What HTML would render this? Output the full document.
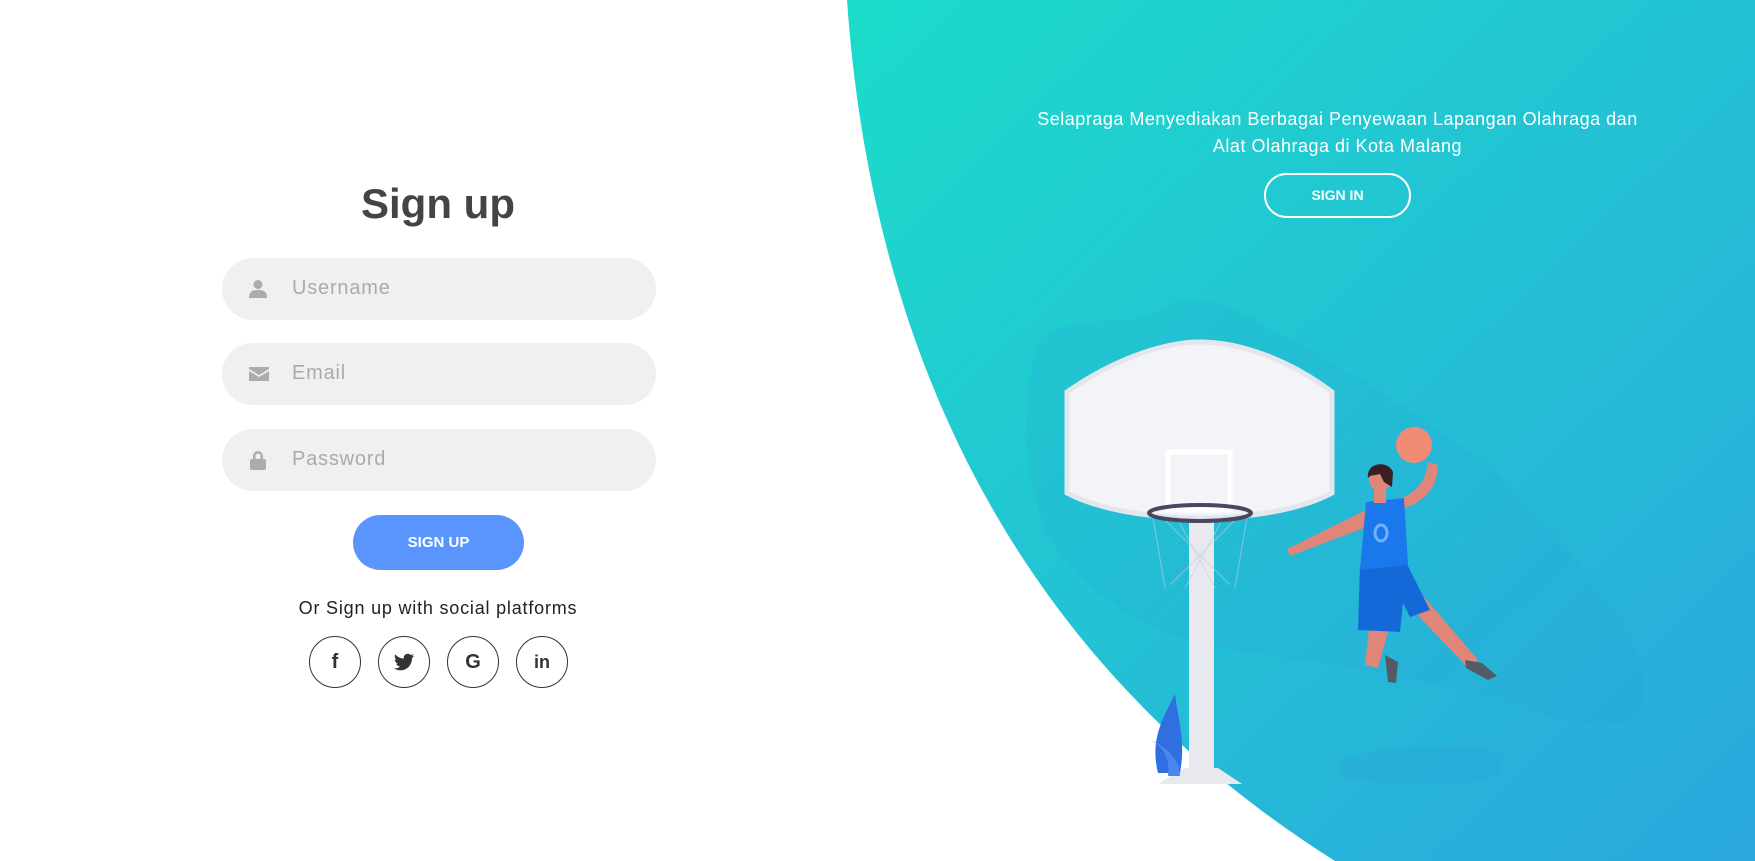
<!DOCTYPE html>
<html><head><meta charset="utf-8"><style>
*{margin:0;padding:0;box-sizing:border-box}
body{width:1755px;height:861px;overflow:hidden;background:#fff;font-family:"Liberation Sans",sans-serif;position:relative}
svg.bg{position:absolute;left:0;top:0}
.title{position:absolute;left:238px;width:400px;top:180px;text-align:center;font-size:42px;font-weight:bold;color:#444}
.inp{position:absolute;left:222px;width:434px;height:62px;border-radius:31px;background:#f0f0f0}
.inp span{position:absolute;left:70px;top:19px;font-size:20px;letter-spacing:0.8px;color:#aaa}
.inp svg{position:absolute;left:26px;top:21px}
.btn{position:absolute;left:353px;top:515px;width:171px;height:55px;border-radius:28px;background:#5995fd;color:#fff;font-weight:bold;font-size:15px;text-align:center;line-height:55px}
.soc{position:absolute;left:188px;width:500px;top:598px;text-align:center;font-size:18px;letter-spacing:0.8px;color:#222}
.c{position:absolute;top:636px;width:52px;height:52px;border:1px solid #333;border-radius:50%;text-align:center;line-height:50px;font-weight:bold;font-size:20px;color:#333}
.rt{position:absolute;left:950px;width:775px;top:106px;text-align:center;color:#fff;font-size:18px;letter-spacing:0.5px;line-height:27px}
.si{position:absolute;left:1264px;top:173px;width:147px;height:45px;border:2px solid #fff;border-radius:23px;color:#fff;font-weight:bold;font-size:14px;text-align:center;line-height:41px}
</style></head><body>
<svg class="bg" width="1755" height="861" viewBox="0 0 1755 861">
<defs><linearGradient id="g" x1="0" y1="0" x2="1" y2="1"><stop offset="0" stop-color="#1bdcca"/><stop offset="1" stop-color="#2ba7de"/></linearGradient></defs>
<path d="M847,0 C870,330 1000,650 1335,861 L1755,861 L1755,0 Z" fill="url(#g)"/>
<path d="M1040,340 C1070,310 1130,330 1160,310 C1190,290 1230,300 1270,330 C1330,360 1400,400 1450,440 C1520,480 1560,540 1600,590 C1640,640 1660,700 1630,720 C1580,740 1520,700 1460,690 C1380,670 1300,660 1230,650 C1160,640 1090,600 1050,540 C1020,480 1020,390 1040,340Z" fill="#2a9fd6" opacity="0.15"/>
<path d="M1340,760 C1380,745 1470,742 1495,752 C1510,765 1500,780 1470,782 C1420,785 1360,785 1340,775 Z" fill="#2a9fd6" opacity="0.25"/>
<path d="M1067,392 C1120,355 1170,342 1200,342 C1240,342 1290,360 1332,392 L1332,493 C1300,510 1250,518 1200,518 C1150,518 1100,510 1067,493 Z" fill="#f3f4f7" stroke="#e4e6ee" stroke-width="5"/>
<rect x="1168" y="452" width="62" height="58" fill="none" stroke="#fff" stroke-width="5"/>
<rect x="1189" y="518" width="25" height="252" fill="#e8e9ef"/>
<path d="M1185,768 L1218,768 L1242,784 L1158,784 Z" fill="#e8e9ef"/>
<path d="M1152,512 L1165,588 M1248,512 L1235,588 M1160,515 L1230,585 M1240,515 L1170,585 M1175,515 L1215,588 M1225,515 L1185,588" stroke="#c6cbd8" stroke-width="1" fill="none" opacity="0.6"/>
<ellipse cx="1200" cy="513" rx="51" ry="8" fill="none" stroke="#4a4560" stroke-width="4"/>
<path d="M1175,694 C1162,720 1150,740 1158,773 L1180,773 C1186,740 1178,720 1175,694Z" fill="#2f6fe0"/>
<path d="M1151,740 C1165,748 1170,760 1168,776 L1180,776 C1180,760 1168,748 1151,740Z" fill="#4a86ee"/>
<path d="M1366,510 L1287,549 L1290,556 L1372,525 Z" fill="#e08678"/>
<path d="M1398,510 C1420,505 1438,490 1438,465 L1428,462 C1426,485 1412,495 1396,500Z" fill="#e08678"/>
<circle cx="1414" cy="445" r="18" fill="#f28b74"/>
<path d="M1370,620 L1365,665 L1378,668 L1390,625Z" fill="#e08678"/>
<path d="M1408,605 L1468,668 L1478,660 L1425,598Z" fill="#e08678"/>
<path d="M1385,655 L1398,662 L1396,683 L1388,682 Z" fill="#555b66"/>
<path d="M1465,660 L1482,663 L1497,676 L1488,680 L1466,668Z" fill="#555b66"/>
<path d="M1360,565 L1405,560 L1430,610 L1410,617 L1403,603 L1400,632 L1358,630 Z" fill="#1568d8"/>
<path d="M1366,502 L1404,498 L1408,565 L1360,570 Z" fill="#1a78ea"/>
<ellipse cx="1381" cy="533" rx="6" ry="8" fill="none" stroke="#6fb0ff" stroke-width="3"/>
<rect x="1374" y="485" width="12" height="18" fill="#e08678"/>
<circle cx="1380" cy="480" r="11" fill="#e08678"/>
<path d="M1368,478 C1366,462 1388,460 1393,472 L1392,487 L1384,482 L1380,474 L1370,476Z" fill="#3a2020"/>
</svg>
<div class="title">Sign up</div>
<div class="inp" style="top:258px"><svg width="20" height="20" viewBox="0 0 20 20"><circle cx="10" cy="5.5" r="4.5" fill="#acacac"/><path d="M1,19 C1,12 5,11 10,11 C15,11 19,12 19,19Z" fill="#acacac"/></svg><span>Username</span></div>
<div class="inp" style="top:343px"><svg width="22" height="20" viewBox="0 0 22 20"><path d="M1,3 H21 V5 L11,11 L1,5Z M1,7 L11,13 L21,7 V17 H1Z" fill="#acacac"/></svg><span>Email</span></div>
<div class="inp" style="top:429px"><svg width="20" height="20" viewBox="0 0 20 20"><path d="M5,9 V6 A5,5 0 0 1 15,6 V9 H12.5 V6 A2.5,2.5 0 0 0 7.5,6 V9Z" fill="#acacac"/><rect x="2" y="9" width="16" height="11" rx="2" fill="#acacac"/></svg><span>Password</span></div>
<div class="btn">SIGN UP</div>
<div class="soc">Or Sign up with social platforms</div>
<div class="c" style="left:309px">f</div>
<div class="c" style="left:378px"><svg width="20" height="18" viewBox="0 0 24 20" style="margin-top:16px"><path d="M24,2.4 C23,2.8 22.2,3 21.2,3.1 C22.3,2.5 23,1.5 23.4,0.4 C22.4,1 21.3,1.4 20.2,1.6 C18.2,-0.5 14.8,-0.5 12.9,1.6 C11.8,2.8 11.4,4.5 11.8,6 C7.7,5.8 4,3.9 1.6,0.9 C0.3,3.1 1,6 3.1,7.5 C2.300,7.5 1.6,7.3 0.9,6.9 C0.9,9.3 2.6,11.4 4.9,11.9 C4.2,12.1 3.4,12.1 2.7,12 C3.4,14 5.2,15.4 7.4,15.5 C5.3,17.1 2.6,18 0,17.7 C2.2,19.2 5,20 7.5,20 C16.6,20 21.6,12.5 21.6,5.9 L21.6,5.3 C22.6,4.6 23.4,3.7 24,2.4Z" fill="#333"/></svg></div>
<div class="c" style="left:447px">G</div>
<div class="c" style="left:516px;font-size:18px">in</div>
<div class="rt">Selapraga Menyediakan Berbagai Penyewaan Lapangan Olahraga dan<br>Alat Olahraga di Kota Malang</div>
<div class="si">SIGN IN</div>
</body></html>
